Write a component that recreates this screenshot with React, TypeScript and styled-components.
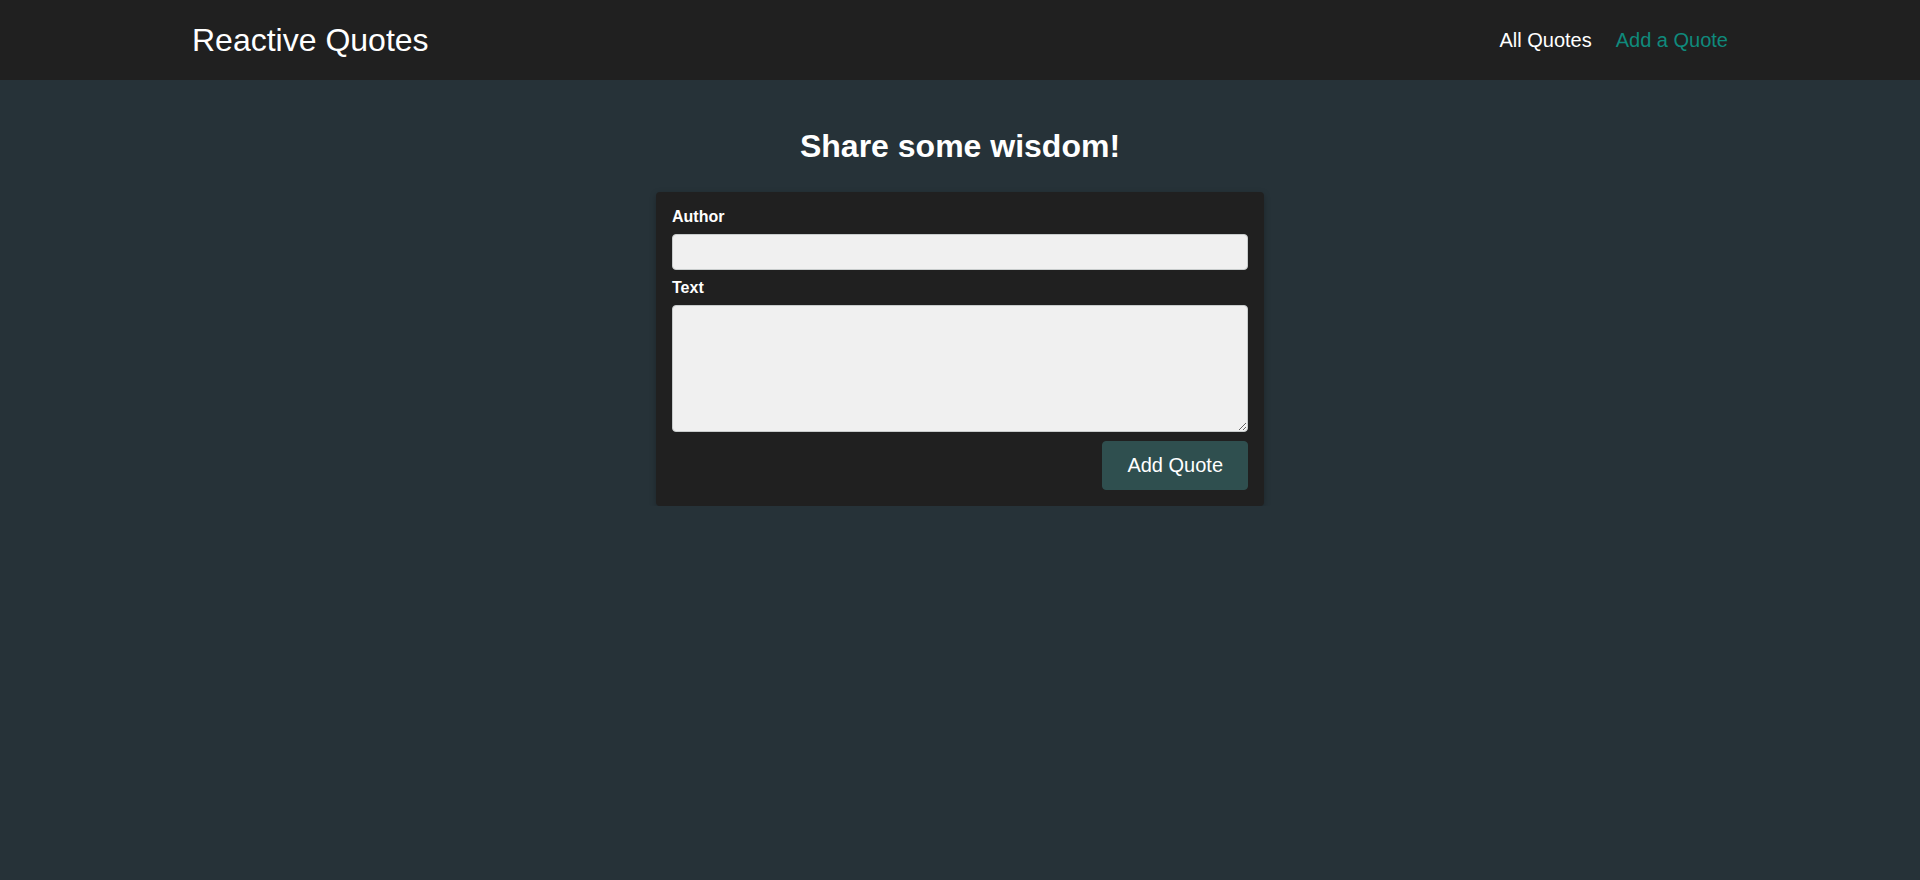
import React from "react";
import styled, { createGlobalStyle } from "styled-components";

const GlobalStyle = createGlobalStyle`
  * { box-sizing: border-box; }
  html, body {
    margin: 0;
    padding: 0;
    background: #263238;
    font-family: "Liberation Sans", Arial, sans-serif;
    color: #ffffff;
  }
`;

const Header = styled.header`
  height: 80px;
  background: #202020;
  display: flex;
  align-items: center;
`;

const HeaderInner = styled.div`
  width: 80%;
  margin: 0 auto;
  display: flex;
  align-items: center;
  justify-content: space-between;
`;

const Logo = styled.div`
  font-size: 32px;
  color: #ffffff;
`;

const NavList = styled.ul`
  list-style: none;
  margin: 0;
  padding: 0;
  display: flex;
  align-items: center;
  gap: 24px;
`;

const NavLink = styled.a<{ $active?: boolean }>`
  font-size: 20px;
  text-decoration: none;
  color: ${(p) => (p.$active ? "#0f8a7c" : "#ffffff")};
  cursor: pointer;
`;

const Main = styled.main`
  display: flex;
  flex-direction: column;
  align-items: center;
`;

const Title = styled.h1`
  margin: 48px 0 27px;
  font-size: 32px;
  font-weight: 700;
  text-align: center;
  color: #ffffff;
`;

const Card = styled.form`
  width: 608px;
  background: #202020;
  border-radius: 4px;
  padding: 16px;
  box-shadow: 0 2px 6px rgba(0, 0, 0, 0.25);
`;

const Control = styled.div`
  margin-bottom: 9px;
`;

const Label = styled.label`
  display: block;
  font-weight: 700;
  font-size: 16px;
  margin-bottom: 8px;
  color: #ffffff;
`;

const Input = styled.input`
  display: block;
  width: 100%;
  font: inherit;
  font-size: 16px;
  padding: 8px;
  background: #f0f0f0;
  border: 1px solid #c8cccc;
  border-radius: 4px;
  color: #000;
`;

const TextArea = styled.textarea`
  display: block;
  width: 100%;
  height: 127px;
  font: inherit;
  font-size: 16px;
  padding: 8px;
  background: #f0f0f0;
  border: 1px solid #c8cccc;
  border-radius: 4px;
  color: #000;
`;

const Actions = styled.div`
  display: flex;
  justify-content: flex-end;
`;

const Button = styled.button`
  font-family: "Liberation Sans", Arial, sans-serif;
  font-size: 20px;
  padding: 12px 24px;
  background: #2f4f4f;
  border: 1px solid #2f4f4f;
  border-radius: 4px;
  color: #ffffff;
  cursor: pointer;
`;

export default function App() {
  return (
    <>
      <GlobalStyle />
      <Header>
        <HeaderInner>
          <Logo>Reactive Quotes</Logo>
          <nav>
            <NavList>
              <li>
                <NavLink>All Quotes</NavLink>
              </li>
              <li>
                <NavLink $active>Add a Quote</NavLink>
              </li>
            </NavList>
          </nav>
        </HeaderInner>
      </Header>
      <Main>
        <Title>Share some wisdom!</Title>
        <Card onSubmit={(e) => e.preventDefault()}>
          <Control>
            <Label htmlFor="author">Author</Label>
            <Input type="text" id="author" />
          </Control>
          <Control>
            <Label htmlFor="text">Text</Label>
            <TextArea id="text" rows={5} />
          </Control>
          <Actions>
            <Button type="submit">Add Quote</Button>
          </Actions>
        </Card>
      </Main>
    </>
  );
}
